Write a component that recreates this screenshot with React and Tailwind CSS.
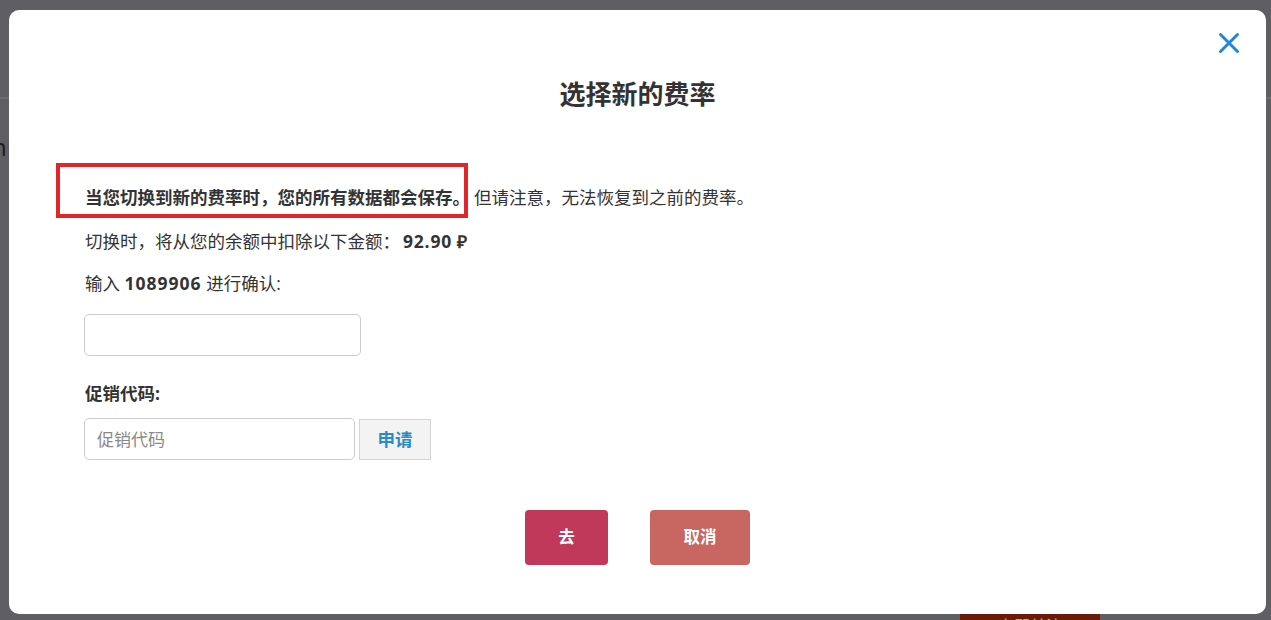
import React from "react";

const font = { fontFamily: '"Open Sans", "Noto Sans CJK SC", sans-serif' };

export default function App() {
  return (
    <div
      className="relative h-[620px] w-full overflow-hidden bg-[#5f5e63] text-[#333]"
      style={font}
    >
      {/* page behind overlay */}
      <div className="absolute left-0 right-0 top-[97px] h-[2px] bg-[#6c6b70]" />
      <div className="absolute left-[-8px] top-[132px] text-[24px] leading-[30px] text-[#1c1c20]">n</div>
      <div className="absolute left-[960px] top-[614px] flex h-[30px] w-[140px] justify-center bg-[#6b1a0a] pt-[2px] text-[16px] leading-[20px] text-[#b9a9a5]">
        立即关注
      </div>

      <div className="relative ml-[9px] mt-[10px] h-[604px] w-[1257px] rounded-[10px] bg-white">
        <button className="absolute right-[26px] top-[22px] flex h-[22px] w-[22px] items-center justify-center">
          <svg width="22" height="22" viewBox="0 0 22 22" fill="none">
            <path d="M2.5 2.5 L19.5 19.5 M19.5 2.5 L2.5 19.5" stroke="#1e88d8" strokeWidth="3" strokeLinecap="round" />
          </svg>
        </button>

        <div className="pt-[66px] text-center text-[26px] font-bold leading-[36px] text-[#333]">
          选择新的费率
        </div>

        <div className="absolute left-[47px] top-[153px] h-[55px] w-[412px] border-[4px] border-[#e0262a]" />

        <div className="pl-[76px]">
          <p className="mt-[72px] text-[17.5px] leading-[26px]">
            <span className="font-bold">当您切换到新的费率时，您的所有数据都会保存。</span>
            <span className="ml-[4px]">但请注意，无法恢复到之前的费率。</span>
          </p>
          <p className="mt-[18px] text-[17.5px] leading-[26px]">
            切换时，将从您的余额中扣除以下金额：
            <span className="ml-[3px] font-bold tracking-[0.8px]">92.90 ₽</span>
          </p>
          <p className="mt-[16px] text-[17.5px] leading-[26px]">
            输入 <span className="font-bold tracking-[1px]">1089906</span> 进行确认:
          </p>
          <input
            className="ml-[-1px] mt-[18px] block h-[42px] w-[277px] rounded-[5px] border border-[#cccccc] bg-white px-3 outline-none"
            type="text"
          />
          <p className="mt-[24px] text-[17.5px] font-bold leading-[26px]">促销代码:</p>
          <div className="ml-[-1px] mt-[12px] flex items-start gap-[4px]">
            <input
              className="block h-[42px] w-[271px] rounded-[5px] border border-[#cccccc] bg-white px-[12px] text-[17px] outline-none placeholder:text-[#8a8a8a]"
              placeholder="促销代码"
              type="text"
              style={font}
            />
            <button className="mt-[1px] flex h-[41px] w-[72px] items-center justify-center border border-[#d4d4d4] bg-[#f3f3f3] text-[17.5px] font-bold text-[#2a8cc4]">
              申请
            </button>
          </div>
        </div>

        <div className="mt-[50px] flex justify-center gap-[42px]">
          <button className="flex h-[55px] w-[83px] items-center justify-center rounded-[4px] bg-[#c0385a] text-[16.5px] font-bold text-white">
            去
          </button>
          <button className="flex h-[55px] w-[100px] items-center justify-center rounded-[4px] bg-[#c86662] text-[16.5px] font-bold text-white">
            取消
          </button>
        </div>
      </div>
    </div>
  );
}
